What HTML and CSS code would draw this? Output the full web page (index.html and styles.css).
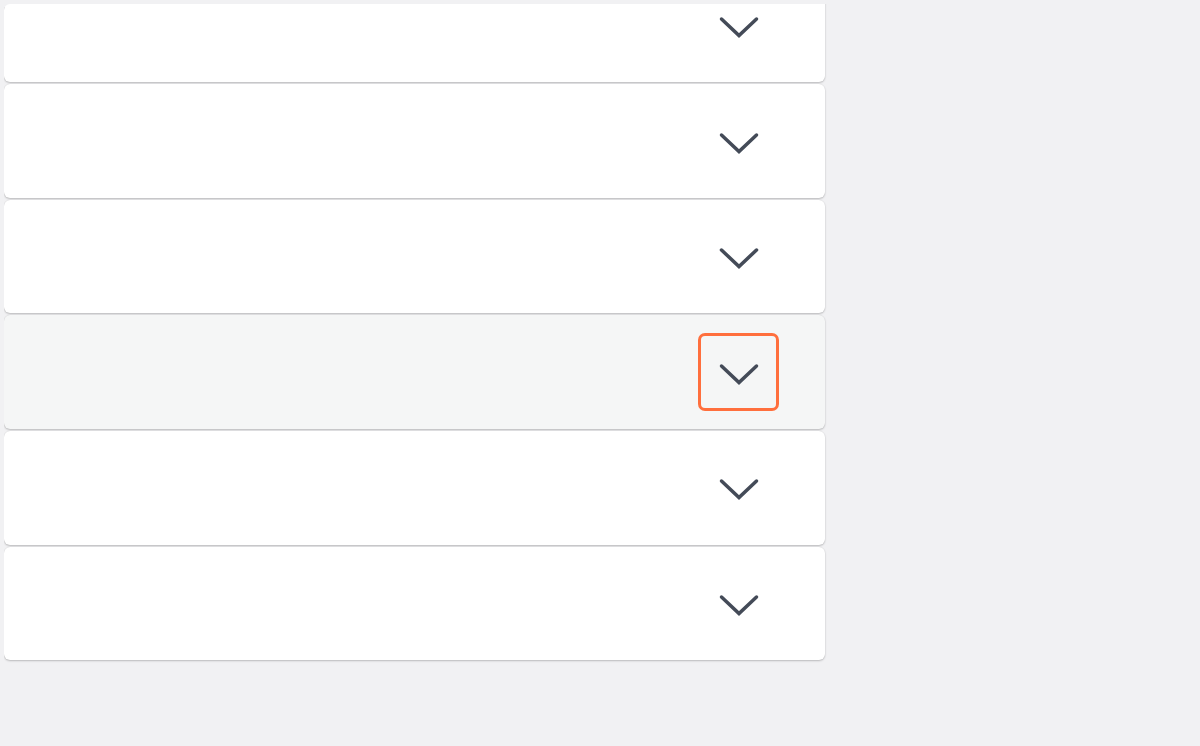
FILE: index.html
```html
<!DOCTYPE html>
<html lang="en">
<head>
<meta charset="utf-8">
<title>Accordion list</title>
<link rel="stylesheet" href="styles.css">
</head>
<body>
<div class="frame">
  <div class="viewport">
    <ul class="list">
      <li class="row"><button class="toggle" aria-label="Expand"><svg class="chev" viewBox="0 0 40 22" width="40" height="22"><polyline points="2.5,3 20,19.5 37.5,3"/></svg></button></li>
      <li class="row"><button class="toggle" aria-label="Expand"><svg class="chev" viewBox="0 0 40 22" width="40" height="22"><polyline points="2.5,3 20,19.5 37.5,3"/></svg></button></li>
      <li class="row"><button class="toggle" aria-label="Expand"><svg class="chev" viewBox="0 0 40 22" width="40" height="22"><polyline points="2.5,3 20,19.5 37.5,3"/></svg></button></li>
      <li class="row row-active"><button class="toggle toggle-focus" aria-label="Expand"><svg class="chev" viewBox="0 0 40 22" width="40" height="22"><polyline points="2.5,3 20,19.5 37.5,3"/></svg></button></li>
      <li class="row"><button class="toggle" aria-label="Expand"><svg class="chev" viewBox="0 0 40 22" width="40" height="22"><polyline points="2.5,3 20,19.5 37.5,3"/></svg></button></li>
      <li class="row"><button class="toggle" aria-label="Expand"><svg class="chev" viewBox="0 0 40 22" width="40" height="22"><polyline points="2.5,3 20,19.5 37.5,3"/></svg></button></li>
    </ul>
  </div>
</div>
</body>
</html>
```
FILE: styles.css
```css
html, body {
  margin: 0;
  padding: 0;
  height: 100%;
}
body {
  background: #f1f1f3;
  font-family: "Liberation Sans", Arial, sans-serif;
  overflow: hidden;
}
.frame {
  padding: 4px 0 0 4px;
}
.viewport {
  width: 828px;
  height: 690px;
  overflow: hidden;
  border-top-left-radius: 6px;
}
.list {
  list-style: none;
  margin: -35.4px 0 0 0;
  padding: 0;
  width: 821px;
}
.row {
  height: 113.6px;
  margin-bottom: 2px;
  background: #ffffff;
  border-radius: 6px;
  box-shadow: 0 1px 2px rgba(0, 0, 0, 0.22), 0 0 1px rgba(0, 0, 0, 0.12);
  display: flex;
  align-items: center;
  justify-content: flex-end;
  padding-right: 46px;
  box-sizing: border-box;
}
.row-active {
  background: #f5f6f6;
}
.toggle {
  width: 81px;
  height: 78px;
  box-sizing: border-box;
  border: 3px solid transparent;
  border-radius: 7px;
  background: transparent;
  padding: 3px 0 0 0;
  margin-top: 0;
  display: flex;
  align-items: center;
  justify-content: center;
  cursor: pointer;
}
.toggle-focus {
  border-color: #ff6f3d;
}
.chev {
  display: block;
  fill: none;
  stroke: #444b58;
  stroke-width: 3.5;
  stroke-linecap: round;
  stroke-linejoin: miter;
}
```
